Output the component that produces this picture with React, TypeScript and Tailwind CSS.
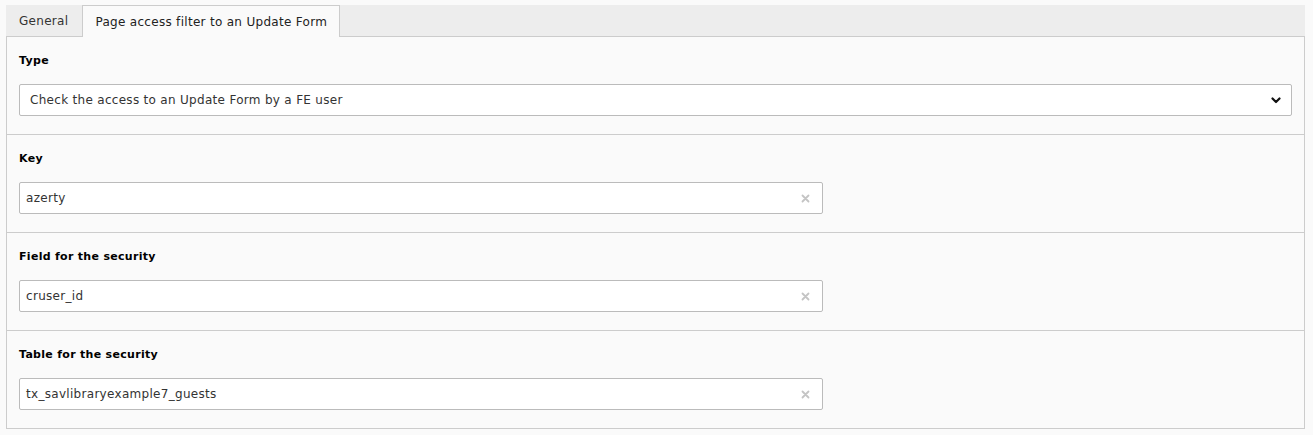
import React from "react";

const fields = [
  { label: "Key", value: "azerty" },
  { label: "Field for the security", value: "cruser_id" },
  { label: "Table for the security", value: "tx_savlibraryexample7_guests" },
];

function ClearIcon() {
  return (
    <svg width="9" height="9" viewBox="0 0 9 9" className="shrink-0">
      <path d="M1.5 1.5 L7.5 7.5 M7.5 1.5 L1.5 7.5" stroke="#c4c4c4" strokeWidth="1.8" strokeLinecap="round" />
    </svg>
  );
}

function Chevron() {
  return (
    <svg width="10" height="7" viewBox="0 0 10 7" className="shrink-0">
      <path d="M1.5 1.5 L5 5 L8.5 1.5" stroke="#111" strokeWidth="2.2" fill="none" strokeLinecap="round" strokeLinejoin="round" />
    </svg>
  );
}

export default function App() {
  return (
    <div
      className="w-[1313px] h-[435px] bg-[#fafafa] pt-[5px] pl-[6px] pr-[8px] text-[12px] tracking-[0.3px] text-[#333]"
      style={{ fontFamily: '"DejaVu Sans", Verdana, sans-serif' }}
    >
      <div className="flex h-[32px] bg-[#ededed] border-b border-[#cccccc]">
        <div className="flex items-center pl-[13px] pr-[14px] pt-[1px] text-[#333] h-[31px]">General</div>
        <div className="flex items-center px-[12px] pt-[1px] h-[32px] bg-[#fafafa] border-x border-t border-[#cccccc] text-[#222]">
          Page access filter to an Update Form
        </div>
      </div>
      <div className="border-x border-b border-[#cccccc] bg-[#fafafa]">
        <div className="px-[12px] pt-[15px] pb-[18px] border-b border-[#cccccc]">
          <div className="font-bold text-black text-[11px] leading-[18px] h-[16px] tracking-[0.3px]">Type</div>
          <div className="mt-[16px] h-[32px] flex items-center justify-between bg-white border border-[#bbbbbb] rounded-[2px] pl-[10px] pr-[10px]">
            <span className="text-[#333]">Check the access to an Update Form by a FE user</span>
            <Chevron />
          </div>
        </div>
        {fields.map((f, i) => (
          <div
            key={f.label}
            className={
              i < fields.length - 1
                ? "px-[12px] pt-[15px] pb-[18px] border-b border-[#cccccc]"
                : "px-[12px] pt-[15px] pb-[18px]"
            }
          >
            <div className="font-bold text-black text-[11px] leading-[18px] h-[16px] tracking-[0.3px]">{f.label}</div>
            <div className="mt-[16px] w-[804px] h-[32px] flex items-center justify-between bg-white border border-[#bbbbbb] rounded-[2px] pl-[6px] pr-[12px]">
              <span className="text-[#333]">{f.value}</span>
              <ClearIcon />
            </div>
          </div>
        ))}
      </div>
    </div>
  );
}
